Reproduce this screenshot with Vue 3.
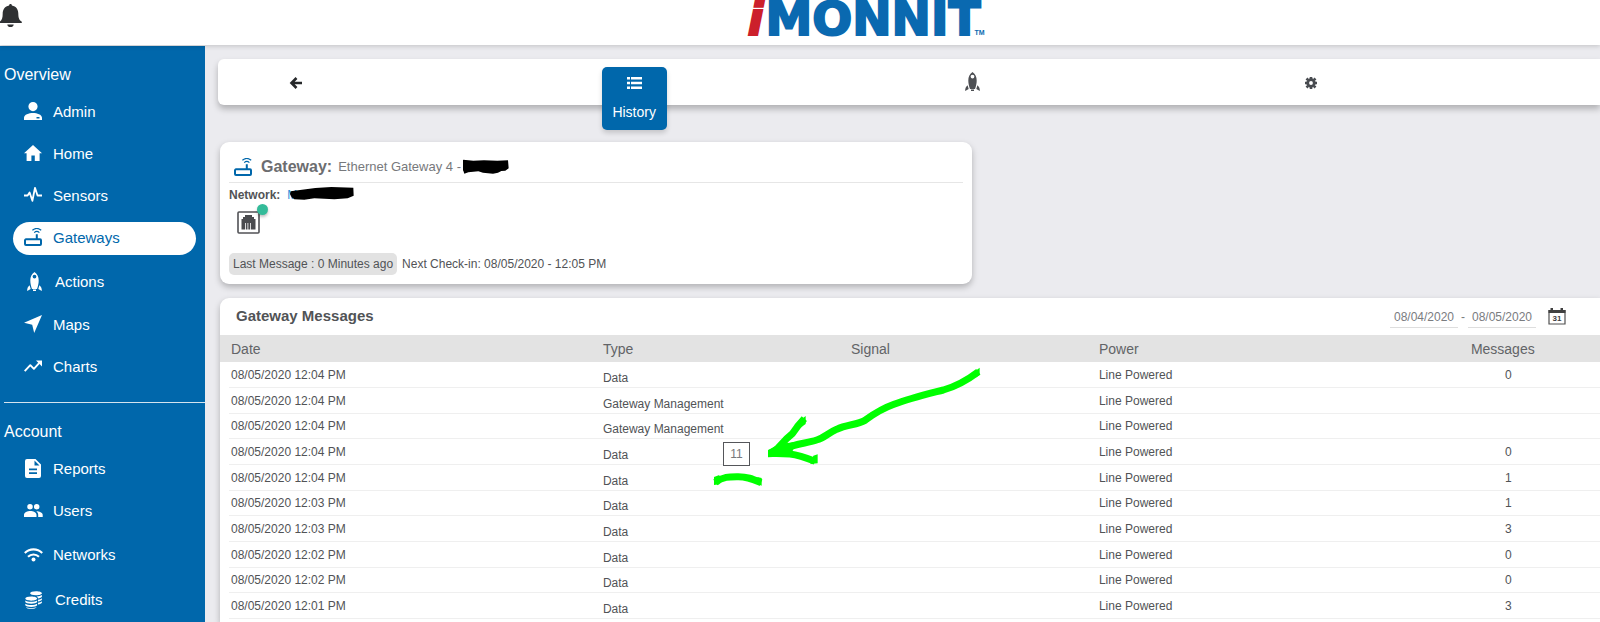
<script setup>
import { h } from 'vue'

const overview = [
  { label: 'Admin', icon: 'admin' },
  { label: 'Home', icon: 'home' },
  { label: 'Sensors', icon: 'pulse' },
  { label: 'Gateways', icon: 'router', active: true },
  { label: 'Actions', icon: 'rocket', tall: true, wide: true },
  { label: 'Maps', icon: 'plane' },
  { label: 'Charts', icon: 'trend' }
]
const account = [
  { label: 'Reports', icon: 'file' },
  { label: 'Users', icon: 'users' },
  { label: 'Networks', icon: 'wifi', tall: true },
  { label: 'Credits', icon: 'coins', tall: true, wide: true }
]
const groups = [
  { title: 'Overview', items: overview },
  { title: 'Account', items: account }
]

const rows = [
  ['12:04', 'Data', '0'],
  ['12:04', 'Gateway Management', ''],
  ['12:04', 'Gateway Management', ''],
  ['12:04', 'Data', '0', '11'],
  ['12:04', 'Data', '1'],
  ['12:03', 'Data', '1'],
  ['12:03', 'Data', '3'],
  ['12:02', 'Data', '0'],
  ['12:02', 'Data', '0'],
  ['12:01', 'Data', '3']
]

const fill = (d) => h('path', { d, fill: 'currentColor', 'fill-rule': 'evenodd' })
const line = (d, w) => h('path', { d, fill: 'none', stroke: 'currentColor', 'stroke-width': w, 'stroke-linejoin': 'round' })

const shapes = {
  admin: [18, 18, [fill('M9 0a4.600 4.600 0 1 1 0 9.200A4.600 4.600 0 0 1 9 0zM0 18v-2.200C0 12.500 5 11 9 11s9 1.500 9 4.800V18zM12.500 15v1.500h3V15z')]],
  home: [18, 18, [fill('M9 1l9 8.200h-2.400V17h-4.800v-5.400H7.400V17H2.600V9.200H0z')]],
  pulse: [18, 18, [line('M0 9.500h3.600l2-3 2.800 8.300L11 1.800l2.500 7.700H18', 1.8)]],
  router: [18, 18, [line('M2 11.300h14a1 1 0 0 1 1 1V16a1 1 0 0 1-1 1H2a1 1 0 0 1-1-1v-3.700a1 1 0 0 1 1-1zM12.800 11V6.200', 2), line('M8.400 2.300c2.600-2.200 6.200-2.200 8.800 0M10.200 4.600c1.500-1.300 3.700-1.300 5.200 0', 1.2)]],
  rocket: [15, 19, [fill('M7.500 0c3 2 4.200 5 4.200 8.500 0 3-.7 5.800-1.700 8.500H5c-1-2.700-1.700-5.500-1.700-8.500C3.300 5 4.500 2 7.500 0zM7.500 2.700a1.900 1.900 0 1 0 0 3.800 1.900 1.900 0 0 0 0-3.800zM2.600 13.200l1.100 3.700L.2 19c-.2-2.300.6-4.300 2.400-5.800zM12.400 13.200l-1.100 3.700 3.500 2.100c.2-2.300-.6-4.300-2.400-5.800zM6 17.500h3V19H6z')]],
  plane: [18, 18, [fill('M18 0l-7.800 18-2-8.200L0 7.800z')]],
  trend: [18, 12, [line('M.7 11.200l5.600-6 3.600 3.600L16 2.200', 1.9), fill('M12 .4h6v6z')]],
  file: [16, 19, [fill('M2 0h8.500L16 5.500V17a2 2 0 0 1-2 2H2a2 2 0 0 1-2-2V2a2 2 0 0 1 2-2zM9.500 1.500v5h5zM4 9.500v1.700h8V9.500zM4 13.300V15h8v-1.700z')]],
  users: [19, 13, [fill('M6 0a2.700 2.700 0 1 1 0 5.500A2.700 2.700 0 0 1 6 0zM12.700 0a2.700 2.700 0 1 1 0 5.500A2.700 2.700 0 0 1 12.700 0zM0 13v-2.300C0 8.400 3.500 7 6.300 7s6.200 1.400 6.200 3.700V13zM14.200 13v-2.300c0-1.500-.8-2.700-1.900-3.500 2.900 0 6.400 1.200 6.400 3.500V13z')]],
  wifi: [19, 14, [line('M.8 5c5-4.800 12.400-4.800 17.400 0M4 8.800c3.200-3.100 7.800-3.100 11 0', 2.1), fill('M9.500 9.600a2 2 0 1 1 0 4 2 2 0 0 1 0-4z')]],
  coins: [18, 18, [fill('M11 .3c3.300 0 5.900.9 5.900 2S14.300 4.300 11 4.300s-5.900-.9-5.900-2S7.700.3 11 .3zM6.200 5.500c3.300 0 5.900.9 5.900 2.100s-2.600 2.100-5.900 2.100S.3 8.800.3 7.600s2.600-2.100 5.900-2.100zM.3 9.400c2 1.700 9.800 1.700 11.800 0v1.500c-1 2.300-10.800 2.300-11.800 0zM.3 12.700c2 1.700 9.800 1.700 11.800 0v1.500c-1 2.300-10.800 2.300-11.800 0zM.8 15.900c2 1.500 8.800 1.500 10.800 0-.5 2.600-10.300 2.600-10.800 0zM16.900 4.100v1.700c-.4.900-1.900 1.500-3.900 1.700-.1-.8-.6-1.400-1.400-1.900 2.300-.1 4.300-.7 5.300-1.500zM16.900 7.200v1.600c-.4.900-1.900 1.500-3.900 1.700V8.700c1.700-.2 3.100-.7 3.900-1.500zM16.900 10.300v1.500c-.4.900-1.900 1.500-3.900 1.700v-1.700c1.700-.2 3.100-.7 3.900-1.500z')]]
}

const Icon = (props) => {
  const [w, ht, kids] = shapes[props.name]
  return h('svg', { width: w, height: ht, viewBox: `0 0 ${w} ${ht}`, 'aria-hidden': 'true' }, kids)
}
Icon.props = ['name']
</script>

<template>
  <div class="page">
    <header class="topbar">
      <button class="bell" aria-label="Notifications">
        <svg width="22" height="24" viewBox="0 0 22 24">
          <path fill="#2f3133" d="M10.500 0c.9 0 1.400.6 1.400 1.500 4.300.9 6.400 4 6.400 8 0 4.500 1 6.700 3.500 8.200v1.300H0v-1.600c2-1.300 2.700-3.900 2.700-7.900 0-4 2.200-7.100 6.400-8C9.100.6 9.600 0 10.500 0zM7.300 20.400h6.400c-.2 1.700-1.500 2.700-3.200 2.700s-3-1-3.200-2.700z" />
        </svg>
      </button>
      <div class="brand">
        <a href="#" class="logo"><span class="logo-i">i</span><span class="logo-name">MONNIT</span><span class="tm">TM</span></a>
      </div>
    </header>

    <div class="body">
      <nav class="sidebar">
        <section v-for="g in groups" :key="g.title" class="group">
          <h2>{{ g.title }}</h2>
          <ul>
            <li v-for="item in g.items" :key="item.label" :class="{ tall: item.tall }">
              <a href="#" :class="{ active: item.active }">
                <span class="nav-icon" :class="{ wide: item.wide }"><Icon :name="item.icon" /></span>
                {{ item.label }}
              </a>
            </li>
          </ul>
        </section>
      </nav>

      <main class="content">
        <div class="tabs">
          <button class="tab" aria-label="Back">
            <svg width="14" height="12" viewBox="0 0 14 12"><path d="M7.500 1L2.500 6l5 5M3 6h10" fill="none" stroke="#26282a" stroke-width="2.600" /></svg>
          </button>
          <button class="tab current">
            <svg width="15" height="12" viewBox="0 0 15 12"><path fill="#fff" d="M0 0h3v2.400H0zM4 0h11v2.400H4zM0 4.800h3v2.400H0zM4 4.800h11v2.400H4zM0 9.600h3V12H0zM4 9.600h11V12H4z" /></svg>
            <span>History</span>
          </button>
          <button class="tab lift" aria-label="Actions"><Icon name="rocket" /></button>
          <button class="tab" aria-label="Settings">
            <svg width="12" height="12" viewBox="0 0 12 12">
              <circle cx="6" cy="6" r="3.300" fill="none" stroke="#484b50" stroke-width="2.800" />
              <path d="M6 0v2M6 10v2M0 6h2M10 6h2M1.500 1.500l1.700 1.700M8.800 8.800l1.700 1.700M10.500 1.500L8.800 3.200M3.200 8.800l-1.700 1.700" stroke="#484b50" stroke-width="2.600" />
            </svg>
          </button>
        </div>

        <section class="card gateway">
          <div class="gateway-head">
            <span class="blue"><Icon name="router" /></span>
            <h1>Gateway:</h1>
            <span class="gateway-name">Ethernet Gateway 4 -</span>
            <svg class="scribble" width="46" height="15" viewBox="0 0 138 45"><path d="M1 2l30 3 32-1 40 1 32-1 2 24-10 7-12 1-10 5-15 3-30-3-14-4-30 3-12 4-3-9-7-1-3-14z" /></svg>
          </div>
          <div class="network">
            <strong>Network:</strong>
            <a href="#">M</a>
            <svg class="scribble over" width="64" height="13" viewBox="0 0 192 39"><path d="M2 13l34-5 40-5 48-3 66 2 1 24-18 8-40 3-60-3-30 4-30-1-8-6-5-10z" /></svg>
          </div>
          <div class="port">
            <svg width="23" height="23" viewBox="0 0 23 23">
              <rect x="1" y="1" width="21" height="21" rx="1" fill="#fff" stroke="#515256" stroke-width="1.600" />
              <path fill="#4a4b4f" d="M8 4h7v2h2v2h1.500v10.500h-14V8H6V6h2zM8 12v6.500h.8V12zM10.500 12v6.500h.8V12zM13 12v6.500h.8V12z" fill-rule="evenodd" />
            </svg>
            <i class="dot"></i>
          </div>
          <div class="checkin">
            <span class="pill">Last Message : 0 Minutes ago</span>
            <span>Next Check-in: 08/05/2020 - 12:05 PM</span>
          </div>
        </section>

        <section class="card messages">
          <div class="messages-head">
            <h2>Gateway Messages</h2>
            <div class="range">
              <input aria-label="From date" value="08/04/2020">
              <span>-</span>
              <input aria-label="To date" value="08/05/2020">
              <button class="calendar" aria-label="Open calendar">
                <svg width="18" height="17" viewBox="0 0 18 17">
                  <path d="M1 2.500h16V16H1z" fill="#fff" stroke="#505050" stroke-width="1.200" />
                  <path d="M.5 2h17v3H.5zM2.500 0h2.500v3H2.500zM12.500 0H15v3h-2.500z" fill="#404040" />
                  <text x="9" y="13" text-anchor="middle" font-size="8" font-weight="700" fill="#404040">31</text>
                </svg>
              </button>
            </div>
          </div>
          <div class="table-wrap">
            <table>
              <thead>
                <tr>
                  <th class="c3">Date</th>
                  <th class="c2">Type</th>
                  <th class="c2">Signal</th>
                  <th class="c3">Power</th>
                  <th>Messages</th>
                </tr>
              </thead>
              <tbody>
                <tr v-for="(r, i) in rows" :key="i">
                  <td>08/05/2020 {{ r[0] }} PM</td>
                  <td class="type">{{ r[1] }}<span v-if="r[3]" class="tip">{{ r[3] }}</span></td>
                  <td></td>
                  <td>Line Powered</td>
                  <td class="count">{{ r[2] }}</td>
                </tr>
              </tbody>
            </table>
            <svg class="marker" width="320" height="160" viewBox="0 0 960 480" aria-hidden="true">
              <g fill="none" stroke="#00ff00" stroke-width="21" stroke-linejoin="round">
                <path d="M865 95C835 118 800 138 760 150C710 163 660 175 612 193C570 208 550 223 525 241C500 255 470 253 440 268C415 278 405 293 380 300C350 310 320 310 285 326L240 340" />
                <path d="M343 236L322 260L308 280L290 296L262 326L240 342" />
                <path d="M240 340L300 342C325 345 345 352 375 364" />
                <path d="M76 427C100 409 120 410 145 410C175 410 190 418 213 428" />
              </g>
              <path fill="#00ff00" d="M234 330L270 312L320 305L300 350L262 350L234 352zM370 347l13-4v27l-22 2zM72 411l16-6v28l-16 2zM202 411l13 3v23l-14-6zM334 238l13-10v24l-12 8zM857 92l12-9v22l-12 8z" />
            </svg>
          </div>
        </section>
      </main>
    </div>
  </div>
</template>

<style>
body {
  background: #ebebef;
}
</style>

<style scoped>
.page {
  min-height: 100vh;
  display: flex;
  flex-direction: column;
  box-sizing: border-box;
  font-family: "Liberation Sans", Arial, sans-serif;
  font-size: 12px;
  color: #515356;
}
h1, h2, ul {
  margin: 0;
  padding: 0;
}
a {
  text-decoration: none;
}
button {
  border: 0;
  padding: 0;
  background: none;
  font: inherit;
  color: inherit;
}
svg {
  display: block;
  flex: none;
}
.topbar {
  display: flex;
  height: 45px;
  background: #fff;
  box-shadow: 0 1px 5px rgba(0, 0, 0, 0.18);
  position: relative;
}
.bell {
  width: 22px;
  height: 24px;
  margin-top: 4px;
}
.brand {
  flex: 1;
  display: flex;
  justify-content: center;
  padding-left: 110px;
}
.logo {
  display: flex;
  font-family: "DejaVu Sans", sans-serif;
  font-size: 47px;
  font-weight: 700;
  line-height: 38px;
  color: #0a69b0;
}
.logo-i {
  color: #cc202b;
  font-style: italic;
}
.logo-i,
.logo-name {
  -webkit-text-stroke: 2px currentColor;
}
.logo-name {
  margin-left: 2px;
}
.tm {
  font-family: "Liberation Sans", Arial, sans-serif;
  font-size: 7px;
  line-height: 8px;
  align-self: flex-start;
  margin: 29px 0 0 -6px;
}
.body {
  flex: 1;
  display: flex;
  padding-top: 1px;
}
.sidebar {
  width: 205px;
  flex: none;
  background: #0067ab;
  color: #fff;
}
.group h2 {
  height: 32px;
  padding: 13px 0 0 4px;
  line-height: 32px;
  font-size: 16px;
  font-weight: 400;
}
.group + .group {
  margin: 14px 0 0 4px;
  border-top: 1px solid #d5e4ef;
}
.group + .group h2 {
  padding-left: 0;
}
.group + .group ul {
  margin-left: -4px;
}
.group li {
  list-style: none;
  height: 42px;
  display: flex;
  align-items: center;
}
.group li.tall {
  height: 45px;
}
.group a {
  flex: 1;
  display: flex;
  align-items: center;
  height: 33px;
  box-sizing: border-box;
  margin: 0 9px 0 13px;
  padding: 0 0 2px 11px;
  gap: 11px;
  border-radius: 17px;
  color: #fff;
  font-size: 15px;
}
.group .tall a {
  padding-bottom: 0;
}
.group a.active {
  background: #fff;
  color: #0067ab;
}
.nav-icon {
  width: 18px;
  display: flex;
  justify-content: center;
}
.nav-icon.wide {
  width: 20px;
}
.content {
  flex: 1;
  min-width: 0;
  display: flex;
  flex-direction: column;
  padding: 13px 0 0 13px;
}
.tabs {
  display: flex;
  justify-content: space-between;
  align-items: flex-start;
  height: 46px;
  box-sizing: border-box;
  padding: 8px 256px 0 45px;
  background: #fff;
  border-radius: 6px 0 0 6px;
  box-shadow: 0 4px 6px rgba(0, 0, 0, 0.25);
}
.tab {
  width: 65px;
  height: 32px;
  flex: none;
  display: flex;
  justify-content: center;
  align-items: center;
  color: #4e5054;
}
.tab.lift {
  height: 28px;
}
.tab.current {
  flex-direction: column;
  justify-content: flex-start;
  height: 63px;
  padding-top: 10px;
  gap: 15px;
  box-sizing: border-box;
  background: #0067ab;
  color: #fff;
  border-radius: 5px;
  box-shadow: 0 3px 5px rgba(0, 0, 0, 0.16);
  font-size: 14px;
  line-height: 16px;
}
.card {
  background: #fff;
  box-shadow: 0 3px 6px rgba(0, 0, 0, 0.25);
  margin-left: 2px;
}
.gateway {
  width: 54.400%;
  height: 142px;
  box-sizing: border-box;
  margin-top: 37px;
  padding: 9px;
  border-radius: 9px;
}
.gateway-head {
  display: flex;
  align-items: center;
  height: 31px;
  padding-left: 5px;
  border-bottom: 1px solid #e6e6e6;
}
.blue {
  color: #0067ab;
  margin-right: 9px;
}
.gateway-head h1 {
  font-size: 16px;
  color: #6c6d70;
}
.gateway-name {
  margin: 0 2px 0 6px;
  font-size: 13px;
  color: #77797c;
}
.network {
  display: flex;
  align-items: center;
  height: 24px;
}
.network a {
  margin-left: 7px;
  color: #2a8fd8;
}
.over {
  margin: -3px 0 0 -7px;
}
.port {
  width: 31px;
  height: 24px;
  margin: 4px 0 0 8px;
  position: relative;
}
.dot {
  position: absolute;
  top: -7px;
  left: 20px;
  width: 11px;
  height: 11px;
  border-radius: 50%;
  background: #33bb99;
  box-shadow: 0 2px 3px rgba(0, 0, 0, 0.25);
}
.checkin {
  display: flex;
  align-items: center;
  gap: 5px;
  margin-top: 18px;
}
.pill {
  padding: 0 4px;
  line-height: 22px;
  border-radius: 5px;
  background: #e2e2e2;
}
.messages {
  flex: 1;
  margin-top: 14px;
  border-radius: 9px 0 0 0;
}
.messages-head {
  display: flex;
  justify-content: space-between;
  align-items: center;
  height: 37px;
  padding: 0 34px 0 16px;
}
.messages-head h2 {
  padding-bottom: 2px;
  font-size: 15px;
  line-height: 32px;
}
.range {
  display: flex;
  align-items: center;
  gap: 3px;
  color: #7a7c7f;
}
.range input {
  width: 68px;
  height: 21px;
  margin-top: 2px;
  padding: 0;
  box-sizing: border-box;
  border: 0;
  border-bottom: 1px solid #dedede;
  background: none;
  font: inherit;
  color: inherit;
  text-align: center;
}
.calendar {
  margin-left: 9px;
}
.table-wrap {
  position: relative;
  padding-left: 9px;
}
table {
  width: 100%;
  table-layout: fixed;
  border-collapse: separate;
  border-spacing: 0;
}
th {
  height: 27px;
  box-sizing: border-box;
  padding: 0 2px;
  background: #e3e3e3;
  text-align: left;
  font-size: 14px;
  font-weight: 400;
  color: #626467;
}
th:first-child {
  box-shadow: -9px 0 0 #e3e3e3;
}
.c3 {
  width: 27.130%;
}
.c2 {
  width: 18.090%;
}
td {
  height: 26px;
  box-sizing: border-box;
  padding: 0 2px;
  border-bottom: 1px solid #efefef;
  line-height: 14px;
}
tr:nth-child(3n) td {
  height: 25px;
}
td.type {
  position: relative;
  padding: 6px 2px 0;
}
td.count {
  padding-left: 36px;
}
.tip {
  position: absolute;
  top: 3px;
  left: 122px;
  z-index: 1;
  width: 25px;
  line-height: 22px;
  text-align: center;
  background: #fff;
  border: 1px solid #55565a;
  color: #77797c;
}
.marker {
  position: absolute;
  left: 470px;
  top: 5px;
  pointer-events: none;
}
</style>
